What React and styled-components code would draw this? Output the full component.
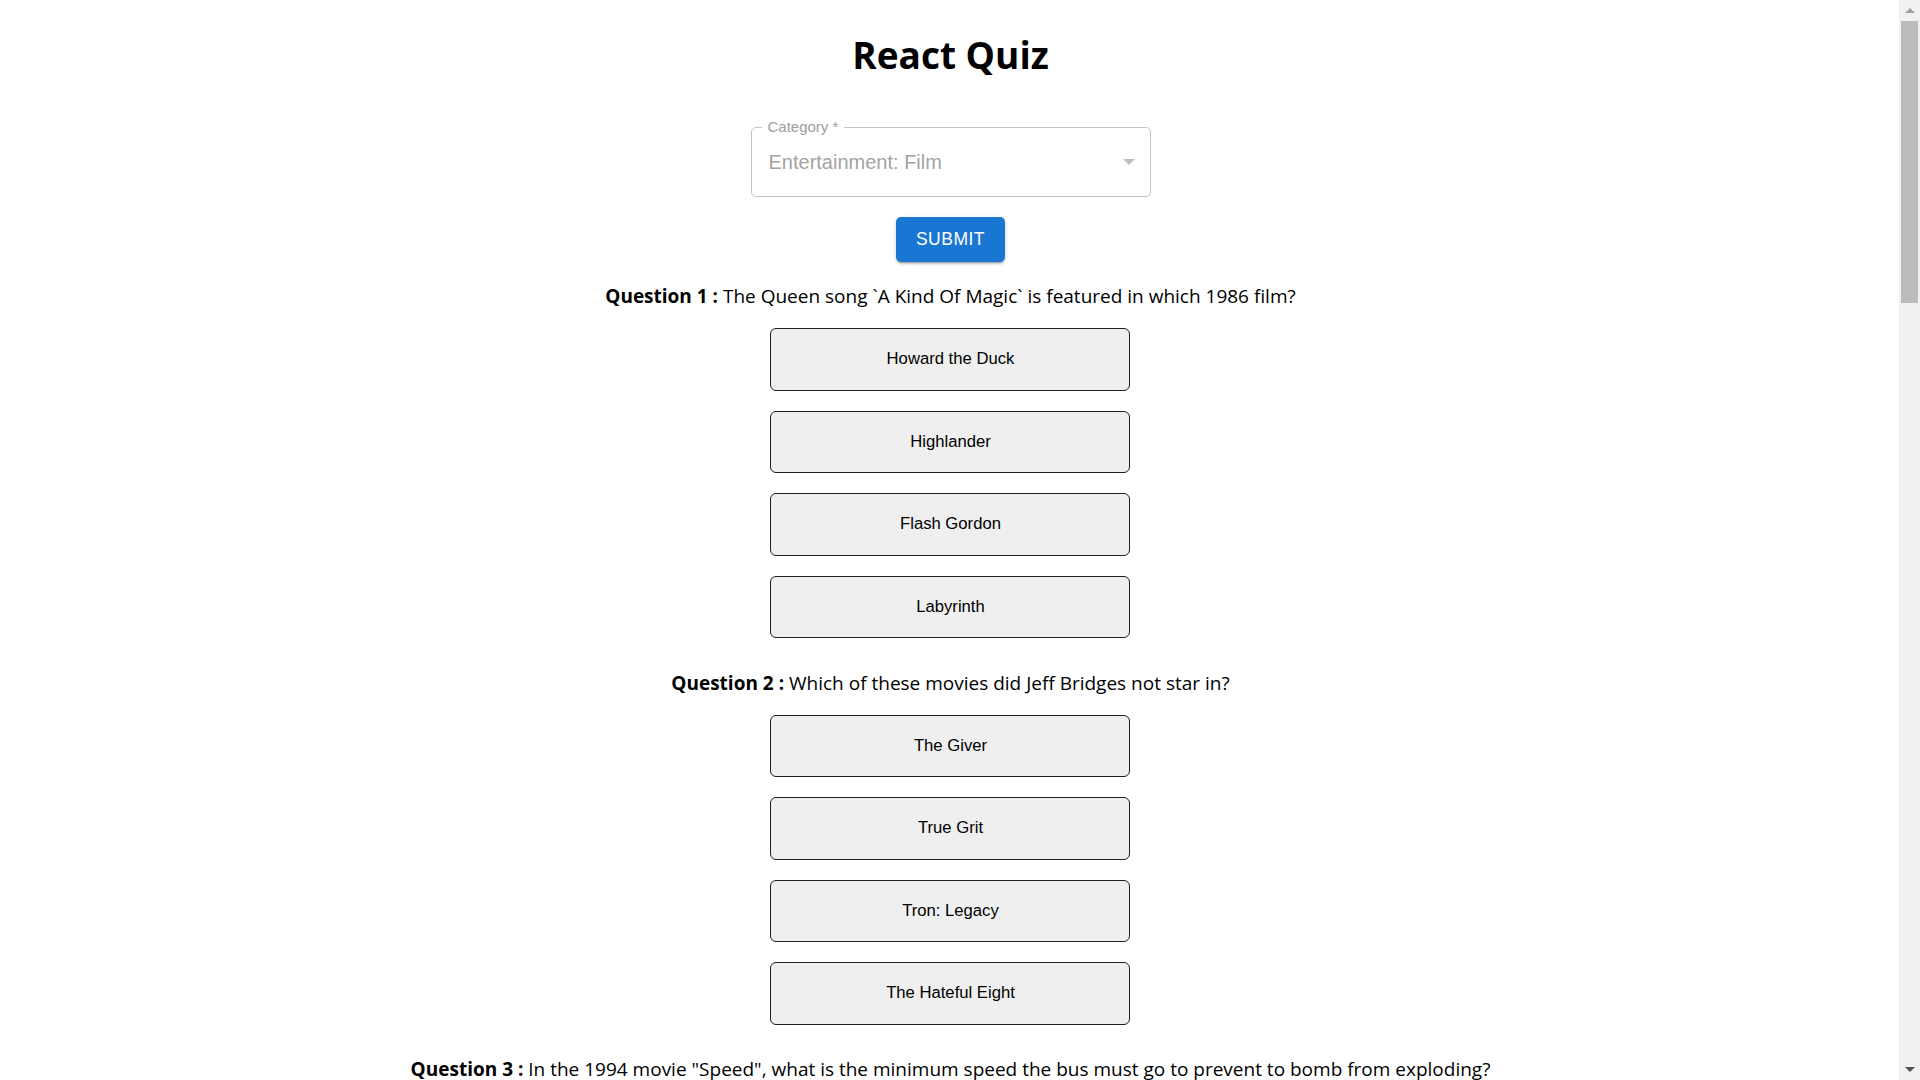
import React from "react";
import styled, { createGlobalStyle } from "styled-components";

const GlobalStyle = createGlobalStyle`
  html, body {
    margin: 0;
    padding: 0;
    background: #ffffff;
  }
  body {
    font-family: "Open Sans", "Noto Sans", sans-serif;
    color: #000;
  }
`;

const Page = styled.div`
  display: flex;
  flex-direction: column;
  align-items: center;
  padding: 28px 19px 40px 0;
`;

const Title = styled.h1`
  margin: 0;
  font-family: "Open Sans", "Noto Sans", sans-serif;
  font-size: 37px;
  line-height: 54px;
  font-weight: 700;
  color: #000;
`;

const SelectField = styled.div`
  position: relative;
  margin-top: 45px;
  width: 400px;
  height: 70px;
  box-sizing: border-box;
  border: 1px solid #c4c4c4;
  border-radius: 5px;
  display: flex;
  align-items: center;
  padding: 0 15px 0 17px;
  font-family: "Liberation Sans", Arial, sans-serif;
`;

const FloatingLabel = styled.span`
  position: absolute;
  top: -10px;
  left: 10px;
  padding: 0 6px;
  background: #fff;
  font-size: 15px;
  line-height: 18px;
  color: #9e9e9e;
`;

const SelectValue = styled.span`
  flex: 1;
  font-size: 20px;
  color: #a3a3a3;
`;

const Caret = styled.span`
  width: 0;
  height: 0;
  border-left: 6px solid transparent;
  border-right: 6px solid transparent;
  border-top: 6px solid #bdbdbd;
`;

const SubmitButton = styled.button`
  margin-top: 20px;
  width: 109px;
  height: 45px;
  border: none;
  border-radius: 5px;
  background: #1976d2;
  color: #fff;
  font-family: "Liberation Sans", Arial, sans-serif;
  font-weight: 400;
  font-size: 17.5px;
  letter-spacing: 0.5px;
  text-transform: uppercase;
  box-shadow: 0 3px 1px -2px rgba(0, 0, 0, 0.2), 0 2px 2px 0 rgba(0, 0, 0, 0.14),
    0 1px 5px 0 rgba(0, 0, 0, 0.12);
  cursor: pointer;
`;

const QuestionList = styled.div`
  display: flex;
  flex-direction: column;
  align-items: center;
  margin-top: 20px;
  gap: 30.5px;
`;

const QuestionBlock = styled.section`
  display: flex;
  flex-direction: column;
  align-items: center;
`;

const QuestionText = styled.p`
  margin: 0 0 18px;
  font-size: 19px;
  line-height: 28px;
  text-align: center;
  color: #000;
`;

const QuestionLabel = styled.strong`
  font-weight: 700;
`;

const Answers = styled.div`
  display: flex;
  flex-direction: column;
  gap: 20px;
`;

const AnswerButton = styled.button`
  width: 360px;
  height: 62.5px;
  box-sizing: border-box;
  background: #efefef;
  border: 1px solid #1f1f1f;
  border-radius: 6px;
  font-family: "Liberation Sans", Arial, sans-serif;
  font-size: 16.67px;
  color: #000;
  cursor: pointer;
`;

const ScrollTrack = styled.div`
  position: fixed;
  top: 0;
  right: 0;
  width: 21px;
  height: 100vh;
  background: #f1f1f1;
  display: flex;
  flex-direction: column;
  align-items: center;
`;

const ScrollArrow = styled.span`
  flex: none;
  height: 21px;
  width: 100%;
  display: flex;
  align-items: center;
  justify-content: center;
  &::before {
    content: "";
    width: 0;
    height: 0;
    border-left: 5px solid transparent;
    border-right: 5px solid transparent;
    ${(p) =>
      p.$dir === "up"
        ? `border-bottom: 5px solid ${p.$color};`
        : `border-top: 5px solid ${p.$color};`}
  }
`;

const ScrollThumb = styled.div`
  flex: none;
  width: 17px;
  height: 282px;
  background: #bcbcbc;
`;

const ScrollSpacer = styled.div`
  flex: 1;
`;

const questions = [
  {
    q: "The Queen song `A Kind Of Magic` is featured in which 1986 film?",
    a: ["Howard the Duck", "Highlander", "Flash Gordon", "Labyrinth"],
  },
  {
    q: "Which of these movies did Jeff Bridges not star in?",
    a: ["The Giver", "True Grit", "Tron: Legacy", "The Hateful Eight"],
  },
  {
    q: 'In the 1994 movie "Speed", what is the minimum speed the bus must go to prevent to bomb from exploding?',
    a: ["50 MPH", "40 MPH", "60 MPH", "70 MPH"],
  },
  {
    q: "Who directed the 1982 film Blade Runner?",
    a: ["Ridley Scott", "James Cameron", "Steven Spielberg", "John Carpenter"],
  },
  {
    q: "Which actor played the role of Neo in The Matrix?",
    a: ["Keanu Reeves", "Brad Pitt", "Tom Cruise", "Will Smith"],
  },
  {
    q: "What year was the first Toy Story film released?",
    a: ["1995", "1993", "1997", "1999"],
  },
  {
    q: "Which film won the Academy Award for Best Picture in 1994?",
    a: ["Forrest Gump", "Pulp Fiction", "The Lion King", "Schindler's List"],
  },
  {
    q: "Who composed the score for the film Jaws?",
    a: ["John Williams", "Hans Zimmer", "Danny Elfman", "Howard Shore"],
  },
  {
    q: "In which film does the character Tyler Durden appear?",
    a: ["Fight Club", "Se7en", "Gone Girl", "Zodiac"],
  },
  {
    q: "What is the name of the hobbit played by Elijah Wood?",
    a: ["Frodo", "Sam", "Pippin", "Merry"],
  },
];

export default function App() {
  return (
    <>
      <GlobalStyle />
      <Page>
        <Title>React Quiz</Title>
        <SelectField>
          <FloatingLabel>Category *</FloatingLabel>
          <SelectValue>Entertainment: Film</SelectValue>
          <Caret />
        </SelectField>
        <SubmitButton>Submit</SubmitButton>
        <QuestionList>
          {questions.map((item, i) => (
            <QuestionBlock key={i}>
              <QuestionText>
                <QuestionLabel>Question {i + 1} :</QuestionLabel> {item.q}
              </QuestionText>
              <Answers>
                {item.a.map((ans) => (
                  <AnswerButton key={ans}>{ans}</AnswerButton>
                ))}
              </Answers>
            </QuestionBlock>
          ))}
        </QuestionList>
      </Page>
      <ScrollTrack aria-hidden="true">
        <ScrollArrow $dir="up" $color="#a3a3a3" />
        <ScrollThumb />
        <ScrollSpacer />
        <ScrollArrow $dir="down" $color="#505050" />
      </ScrollTrack>
    </>
  );
}
